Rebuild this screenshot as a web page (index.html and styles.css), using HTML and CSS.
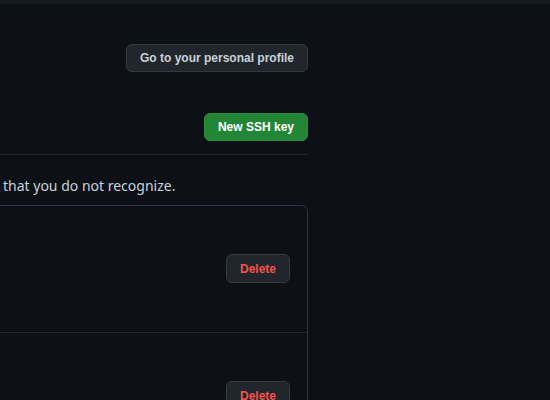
FILE: index.html
```html
<!DOCTYPE html>
<html lang="en">
<head>
<meta charset="utf-8">
<title>SSH keys</title>
<link rel="stylesheet" href="styles.css">
</head>
<body>
<div class="topbar"></div>
<main class="main">
  <div class="profile-row">
    <a class="btn btn-sm" href="#">Go to your personal profile</a>
  </div>
  <div class="subhead">
    <a class="btn btn-sm btn-primary" href="#">New SSH key</a>
  </div>
  <p class="note">that you do not recognize.</p>
  <div class="box">
    <div class="box-row">
      <button class="btn btn-sm btn-danger" type="button">Delete</button>
    </div>
    <div class="box-row">
      <button class="btn btn-sm btn-danger" type="button">Delete</button>
    </div>
  </div>
</main>
</body>
</html>
```

FILE: styles.css
```css
html, body {
  margin: 0;
  padding: 0;
  background: #0d1117;
  color: #c9d1d9;
  font-family: "Liberation Sans", Arial, sans-serif;
  font-size: 14px;
  overflow: hidden;
}

.topbar {
  height: 4px;
  background: #161b22;
}

.main {
  width: 328px;
  margin-left: -20px;
}

.profile-row {
  display: flex;
  justify-content: flex-end;
  padding-top: 40px;
}

.subhead {
  display: flex;
  justify-content: flex-end;
  margin-top: 41px;
  padding-bottom: 13px;
  border-bottom: 1px solid #21262d;
}

.btn {
  display: inline-flex;
  align-items: center;
  justify-content: center;
  box-sizing: border-box;
  height: 28px;
  padding: 0 13px;
  font-family: inherit;
  font-size: 12px;
  font-weight: 700;
  line-height: 20px;
  color: #c9d1d9;
  text-decoration: none;
  background: #21262d;
  border: 1px solid #363b42;
  border-radius: 6px;
}

.btn-primary {
  color: #ffffff;
  background: #238636;
  border-color: #2f8d41;
}

.btn-danger {
  color: #f85149;
  height: 29px;
}

.note {
  margin: 20px 0 9px;
  padding-left: 23px;
  line-height: 21px;
  font-family: "Noto Sans", "Liberation Sans", sans-serif;
  font-size: 14px;
}

.box {
  border: 1px solid #30363d;
  border-radius: 6px;
}

.box-row {
  display: flex;
  justify-content: flex-end;
  align-items: flex-start;
  height: 126px;
  box-sizing: border-box;
  padding: 48px 17px 0 0;
}

.box-row + .box-row {
  border-top: 1px solid #21262d;
}
```
